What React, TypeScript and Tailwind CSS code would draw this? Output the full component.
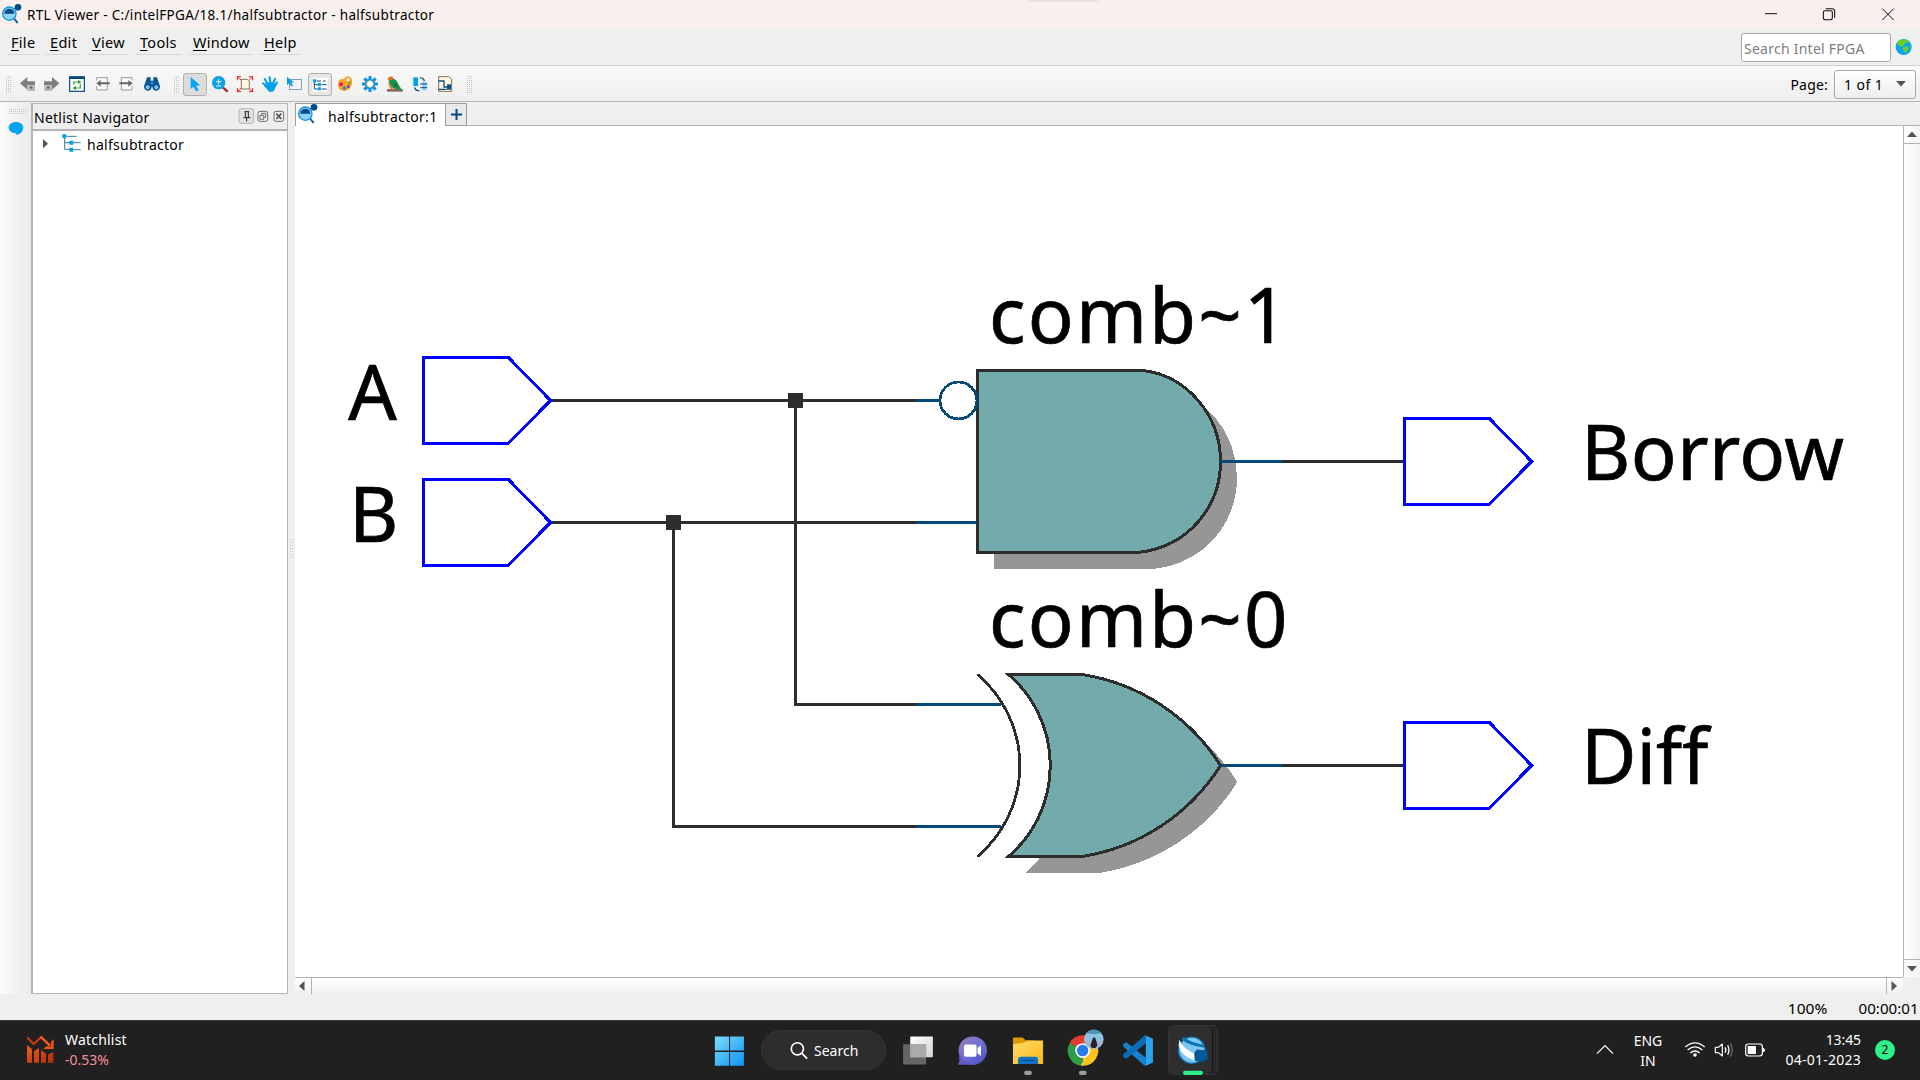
import type { ReactNode } from "react";

const UI = "font-['Noto_Sans',sans-serif]";

/* Icon strip cell: `v` is a viewBox in roughly third-pixel units. */
function Cell({ v, className, children }: { v: string; className: string; children?: ReactNode }) {
  return (
    <svg viewBox={v} className={`block shrink-0 ${className}`} fill="none">
      {children}
    </svg>
  );
}

/* Dotted drag handle: 3 x 9 dots, two pixels apart. */
function Grip({ vertical = false }: { vertical?: boolean }) {
  const dots: ReactNode[] = [];
  for (let i = 0; i < 9; i++)
    for (let j = 0; j < 3; j++)
      dots.push(
        <rect key={`${i}-${j}`} x={vertical ? j * 2 : i * 2} y={vertical ? i * 2 : j * 2} width="1" height="1" fill="#c4c4c4" />
      );
  return (
    <svg viewBox={vertical ? "0 0 5 17" : "0 0 17 5"} className={vertical ? "h-[17px] w-[5px] shrink-0" : "h-[5px] w-[17px] shrink-0"}>
      {dots}
    </svg>
  );
}

function RtlLogo({ className }: { className: string }) {
  return (
    <svg viewBox="0 0 60 60" className={className} fill="none">
      <path d="M35 42L47 57" stroke="#0b5a94" strokeWidth="6" />
      <path d="M30 18L48 9" stroke="#0f5287" strokeWidth="4" />
      <circle cx="22" cy="29" r="20" fill="#8ed3f8" stroke="#1595dc" strokeWidth="4" />
      <path d="M7 29a15 15 0 0 1 30 0z" fill="#004a86" />
      <circle cx="48" cy="10" r="10" fill="#004a86" />
    </svg>
  );
}

function TreeGlyph() {
  return (
    <>
      <path d="M194 410V448H210M194 428H210M200 409H230M220 428H242M220 449H242" stroke="#3b78a8" strokeWidth="3" />
      <path d="M187 403h12v12h-12zM208 422h12v12h-12zM208 443h12v12h-12z" fill="#00a3ea" />
    </>
  );
}

const MENUS = [
  ["F", "ile", "w-[32px]"],
  ["E", "dit", "w-[35px]"],
  ["V", "iew", "w-[41px]"],
  ["T", "ools", "w-[46px]"],
  ["W", "indow", "w-[64px]"],
  ["H", "elp", "w-[40px]"],
];

function TitleBar() {
  return (
    <div className="flex h-[29px] shrink-0 items-center bg-[#f9f0ed]">
      <RtlLogo className="ml-[2px] h-[20px] w-[20px] shrink-0 -translate-y-px" />
      <span className="ml-[5px] w-[1001px] whitespace-nowrap pt-px text-[13.5px] leading-[29px] tracking-[0.32px] text-black">
        RTL Viewer - C:/intelFPGA/18.1/halfsubtractor - halfsubtractor
      </span>
      <div className="h-[2px] w-[70px] self-start rounded-b bg-[#e9e2df]" />
      <Cell v="240 0 480 87" className="ml-auto h-[29px] w-[160px]">
        <path d="M255 41H291" stroke="#111" strokeWidth="3" />
        <rect x="430" y="32" width="27" height="27" rx="5" stroke="#111" strokeWidth="3.2" />
        <path d="M437 26H456Q464 26 464 34V53" stroke="#111" strokeWidth="3.2" />
        <path d="M607 26L641 60M641 26L607 60" stroke="#111" strokeWidth="3" />
      </Cell>
    </div>
  );
}

function MenuBar() {
  return (
    <div className="flex h-[37px] shrink-0 border-b border-[#d0d0d0] bg-[#efefef]">
      <div className="flex gap-[7px] pl-[7px]">
        {MENUS.map(([k, rest, w]) => (
          <div key={k} className={`h-[26px] border-b border-[#d6d6d6] pl-[4px] text-[14.5px] leading-[26px] tracking-[0.3px] text-black ${w}`}>
            <span className="underline underline-offset-2">{k}</span>
            {rest}
          </div>
        ))}
      </div>
      <div className="ml-auto mt-[4px] flex h-[29px] w-[150px] items-center rounded-[3px] border border-[#a9a9a9] bg-white pl-[2px] pt-[2px] text-[14px] tracking-[0.25px] text-[#7d7d7d]">
        Search Intel FPGA
      </div>
      <Cell v="645 87 75 108" className="ml-[4px] h-[36px] w-[25px]">
        <circle cx="671" cy="141" r="24" fill="#0aa3f5" />
        <path d="M652 127Q660 116 677 119L690 127 683 130 677 126 672 136 664 140 656 137zM668 141Q680 138 687 144 684 152 675 160L670 152zM690 134l5 6-3 6z" fill="#6fce1f" />
      </Cell>
    </div>
  );
}

function ToolBar() {
  return (
    <div className="flex h-[36px] shrink-0 items-start border-b border-[#b4b4b4] bg-gradient-to-b from-[#fafafa] to-[#eeeeee]">
      <div className="flex h-[35px] w-[17px] items-center pl-[6px] pt-px"><Grip vertical /></div>
      <Cell v="51 198 69 105" className="h-[35px] w-[23px]">
        <path d="M60 250L82 231V244H105V256H82V269z" fill="#7f7f7f" />
        <path d="M82 256H105V273H82z" fill="#b9b9b9" /><path d="M90 259h7v7h-7z" fill="#666" />
      </Cell>
      <Cell v="120 198 72 105" className="h-[35px] w-[24px]">
        <path d="M178 250L156 231V244H132V256H156V269z" fill="#7f7f7f" />
        <path d="M133 256H156V273H133z" fill="#b9b9b9" /><path d="M141 259h7v7h-7z" fill="#666" />
      </Cell>
      <Cell v="192 198 78 105" className="h-[35px] w-[26px]">
        <rect x="209" y="231" width="44" height="43" fill="#fff" stroke="#004a80" strokeWidth="3.5" />
        <path d="M207 229H255V237H207z" fill="#004a80" />
        <path d="M221 254V246H236M241 253V264H226" stroke="#3f9a3d" strokeWidth="3.5" />
        <path d="M234 239L244 246 234 253zM228 257L218 264 228 271z" fill="#3f9a3d" />
      </Cell>
      <Cell v="270 198 75 105" className="h-[35px] w-[25px]">
        <path d="M290 241V233H322V270H290V258" fill="#fafafa" stroke="#9b9b9b" strokeWidth="3" />
        <path d="M289 250L302 240V247H329V253H302V260z" fill="#666" />
      </Cell>
      <Cell v="345 198 69 105" className="h-[35px] w-[23px]">
        <path d="M396 241V233H364V270H396V258" fill="#fafafa" stroke="#9b9b9b" strokeWidth="3" />
        <path d="M398 250L385 240V247H358V253H385V260z" fill="#666" />
      </Cell>
      <Cell v="414 198 84 105" className="h-[35px] w-[28px]">
        <path d="M441 232H452V242H460V232H471L480 259A12 12 0 0 1 459 268L456 258 453 268A12 12 0 0 1 432 259z" fill="#0b5795" />
        <circle cx="443" cy="262" r="6" fill="#7cc6ee" /><circle cx="469" cy="262" r="6" fill="#7cc6ee" />
        <path d="M454 246h4v6h-4z" fill="#7cc6ee" />
      </Cell>
      <div className="flex h-[35px] w-[17px] items-center pl-[8px] pt-px"><Grip vertical /></div>
      <div className="mt-[7px] h-[23px] w-[24px] rounded-[3px] border border-[#b1b1b1] bg-[#dcdcdc]">
        <Cell v="552 222 66 63" className="h-[21px] w-[22px]">
          <path d="M572 231L600 256 588 257 596 271 588 274 581 260 572 266z" fill="#00a3f5" />
        </Cell>
      </div>
      <Cell v="621 198 78 105" className="h-[35px] w-[26px]">
        <path d="M669 263L683 275" stroke="#b81e1e" strokeWidth="7" />
        <circle cx="656" cy="248" r="20" fill="#08a0ea" />
        <path d="M648 245H664M656 237V253M648 258H664" stroke="#fff" strokeWidth="3" />
      </Cell>
      <Cell v="699 198 75 105" className="h-[35px] w-[25px]">
        <path d="M724 238H741L748 244V267H724z" fill="#fff8dc" stroke="#857268" strokeWidth="3" />
        <path d="M712 241V230H723M713 231L723 240M747 230H758V241M757 231L748 239M712 264V275H723M713 274L723 265M747 275H758V264M757 274L748 266" stroke="#f01818" strokeWidth="3" />
      </Cell>
      <Cell v="774 198 75 105" className="h-[35px] w-[25px]">
        <path d="M798 256L789 250M802 250L794 237M811 248L809 232M820 250L825 236M824 260L831 247" stroke="#00a3ea" strokeWidth="6" strokeLinecap="round" />
        <path d="M795 252L805 247H820L827 252Q826 270 819 275H807Q800 266 792 258z" fill="#00a3ea" />
      </Cell>
      <Cell v="849 198 75 105" className="h-[35px] w-[25px]">
        <rect x="868.5" y="238.5" width="36" height="30" stroke="#0b4f88" strokeWidth="3" strokeDasharray="3 3" />
        <path d="M861 230L882 247 874 248 879 257 873 259 868 250 861 256z" fill="#08a0ea" />
      </Cell>
      <div className="mt-[7px] h-[23px] w-[24px] rounded-[3px] border border-[#b1b1b1] bg-[#e6e6e6]">
        <Cell v="927 222 66 63" className="h-[21px] w-[22px]">
          <rect x="938" y="233" width="45" height="42" fill="#fff" />
          <path d="M943 243V267H956M943 254H956M949 243H963M965 254H980M965 267H980M969 243H977" stroke="#0b4f88" strokeWidth="3" />
          <path d="M939 238h9v9h-9zM954 249h9v9h-9zM954 262h9v9h-9z" fill="#00a3ea" />
        </Cell>
      </div>
      <Cell v="996 198 78 105" className="h-[35px] w-[26px]">
        <path d="M1014 253Q1016 234 1032 238 1034 228 1046 229 1058 233 1056 250 1052 272 1033 273 1013 272 1014 253z" fill="#f9a326" />
        <circle cx="1044" cy="239" r="5" fill="#fff" />
        <circle cx="1023" cy="253" r="6" fill="#e3215b" /><circle cx="1033" cy="264" r="5" fill="#1f85cf" />
        <circle cx="1045" cy="260" r="4" fill="#5a3fb0" /><circle cx="1048" cy="250" r="4" fill="#5bb12c" />
      </Cell>
      <Cell v="1074 198 75 105" className="h-[35px] w-[25px]">
        <path d="M1110 228V276M1086 252H1134M1093 235L1127 269M1127 235L1093 269" stroke="#1193df" strokeWidth="9" />
        <circle cx="1110" cy="252" r="16" fill="#1193df" />
        <circle cx="1110" cy="252" r="10" fill="#fff" stroke="#d9b36a" strokeWidth="3" />
      </Cell>
      <Cell v="1149 198 75 105" className="h-[35px] w-[25px]">
        <path d="M1161 267H1208V275H1161z" fill="#86685c" />
        <path d="M1163 236Q1168 227 1178 230L1182 240 1170 245z" fill="#f06a13" />
        <path d="M1166 242L1182 237Q1192 241 1196 255L1208 273 1190 267Q1170 266 1166 242z" fill="#169447" />
        <path d="M1166 243Q1170 262 1183 268L1174 269Q1162 256 1166 243z" fill="#ee7f18" />
        <path d="M1180 246L1198 262 1184 258z" fill="#0a6e2e" />
      </Cell>
      <Cell v="1224 198 75 105" className="h-[35px] w-[25px]">
        <path d="M1240 232H1254V258H1240z" fill="#00a0f0" />
        <path d="M1266 245H1280V271H1266z" fill="#8fd3f5" />
        <path d="M1261 252H1282M1261 263H1282" stroke="#0b4f88" strokeWidth="3" />
        <path d="M1260 233Q1271 234 1273 243M1244 262Q1246 272 1258 272" stroke="#0b4f88" strokeWidth="4" />
      </Cell>
      <Cell v="1299 198 69 105" className="h-[35px] w-[23px]">
        <path d="M1316 230H1346L1355 238V274H1316z" fill="#fff8dd" stroke="#7d7060" strokeWidth="3" />
        <path d="M1315 243H1332V261H1342M1315 268H1340" stroke="#0b4f88" strokeWidth="4" />
        <path d="M1341 253h12v16h-12z" fill="#0b4f88" />
      </Cell>
      <div className="flex h-[35px] w-[17px] items-center pl-[11px] pt-px"><Grip vertical /></div>
      <div className="ml-auto flex h-[35px] items-center pr-[4px] pt-px">
        <span className="pt-px text-[14px] tracking-[0.2px] text-black">Page:</span>
        <div className="ml-[6px] flex h-[29px] w-[82px] items-center justify-between rounded-[3px] border border-[#a9a9a9] bg-gradient-to-b from-white to-[#eeeeee] pl-[9px] pr-[9px]">
          <span className="pt-px text-[14px] tracking-[0.45px] text-black">1 of 1</span>
          <svg viewBox="0 0 10 6" className="mb-px h-[6px] w-[10px]"><path d="M0 0H10L5 5.5z" fill="#555" /></svg>
        </div>
      </div>
    </div>
  );
}

function Navigator() {
  return (
    <div className="mt-px flex h-[891px] w-[257px] shrink-0 flex-col border border-l-2 border-[#b4b4b4] bg-white">
      <div className="flex h-[27px] shrink-0 border-b-2 border-[#b4b4b4] bg-[#eeeeee]">
        <span className="pl-px text-[14px] leading-[27px] tracking-[0.25px] text-black">Netlist Navigator</span>
        <Cell v="710 312 150 75" className="ml-auto h-[25px] w-[50px]">
          <rect x="716" y="326" width="44" height="44" rx="6" fill="#e0e0e0" stroke="#b5b5b5" strokeWidth="3" />
          <path d="M733 335H746M735 335V353M744 335V353M729 353H750M739 353V364" stroke="#222" strokeWidth="3" />
          <rect x="773" y="334" width="29" height="30" rx="6" stroke="#6b6b6b" strokeWidth="3" />
          <path d="M784 345V340H796V352H791M779 346H790V358H779z" stroke="#6b6b6b" strokeWidth="3" />
          <rect x="821" y="334" width="29" height="30" rx="6" stroke="#6b6b6b" strokeWidth="3" />
          <path d="M828 341L843 357M843 341L828 357" stroke="#555" strokeWidth="5" />
        </Cell>
      </div>
      <div className="flex h-[29px] items-start">
        <Cell v="99 393 150 87" className="h-[29px] w-[50px]">
          <path d="M129 417L144 431 129 445z" fill="#555" />
          <TreeGlyph />
        </Cell>
        <span className="pl-[4px] text-[14px] leading-[27px] tracking-[0.27px] text-black">halfsubtractor</span>
      </div>
    </div>
  );
}

const SHADOW = "#969696";
const TEAL = "#73abac";
const INK = "#2d2d2d";
const NAVY = "#034a78";

const AND_BODY = "M977.5 370.5H1143C1188 376 1220.5 416 1220.5 461.5S1188 547 1138 552.5H977.5z";
const XOR_BODY = "M1008.5 674.5H1082A200 200 0 0 1 1220.5 765.5A200 200 0 0 1 1082 856.5H1008.5A120 120 0 0 0 1008.5 674.5z";

function Port({ x, y }: { x: number; y: number }) {
  return <path d={`M${x} ${y - 43}h85l42 43l-42.5 43h-84.5z`} stroke="#0000ff" strokeWidth="3" fill="#fff" />;
}

function Schematic() {
  return (
    <svg viewBox="295 126 1608 851" className="block h-[851px] w-[1608px] bg-white font-['Noto_Sans',sans-serif]" fill="none" fontSize="76" shapeRendering="crispEdges">
      <g stroke={INK} strokeWidth="3">
        <path d="M551 400.5H916M551 522.5H916M795.5 400.5V706M794 704.5H916M673.5 522.5V828M672 826.5H916M1282 461.5H1404M1282 765.5H1404" />
      </g>
      <path d="M788 393h15v15h-15zM666 515h15v15h-15z" fill={INK} />
      <path d={AND_BODY} fill={SHADOW} transform="translate(16.5 16.3)" />
      <path d={XOR_BODY} fill={SHADOW} transform="translate(17 16.5)" />
      <path d={AND_BODY} fill={TEAL} stroke={INK} strokeWidth="3" />
      <path d={XOR_BODY} fill={TEAL} stroke={INK} strokeWidth="3" />
      <g stroke={NAVY} strokeWidth="3">
        <path d="M916 400.5H940M916 522.5H977M916 704.5H1001M916 826.5H1001M1221 461.5H1282M1221 765.5H1282" />
        <circle cx="958.5" cy="400.5" r="18.5" fill="#fff" strokeWidth="2.8" />
      </g>
      <path d="M977.5 674.5A119 119 0 0 1 977.5 856.5" stroke={INK} strokeWidth="2.8" />
      <Port x={423.5} y={400.5} />
      <Port x={423.5} y={522.5} />
      <Port x={1404.5} y={461.5} />
      <Port x={1404.5} y={765.5} />
      <g fill="#000" stroke="#000" strokeWidth="0.7">
        <text x="348.2" y="419.7">A</text>
        <text x="349" y="541.5">B</text>
        <text x="989" y="342.8" textLength="298.5">comb~1</text>
        <text x="989" y="646.8" textLength="298.5">comb~0</text>
        <text x="1581" y="480" textLength="263">Borrow</text>
        <text x="1581" y="784.2">Diff</text>
      </g>
    </svg>
  );
}

function Arrow({ d }: { d: string }) {
  return <svg viewBox="0 0 10 10" className="h-[10px] w-[10px]"><path d={d} fill="#555" /></svg>;
}

function Editor() {
  return (
    <div className="flex w-[1625px] shrink-0 flex-col">
      <div className="flex h-[24px] shrink-0 items-start">
        <div className="mt-px flex h-[24px] w-[151px] shrink-0 items-center border border-[#9d9d9d] bg-white">
          <RtlLogo className="ml-[2px] h-[20px] w-[20px] shrink-0 -translate-y-px" />
          <span className="ml-[10px] mt-[3px] whitespace-nowrap text-[14px] leading-5 tracking-[0.27px] text-black">halfsubtractor:1</span>
        </div>
        <div className="mt-px flex h-[23px] w-[21px] shrink-0 items-center justify-center border border-l-0 border-[#9d9d9d] bg-[#e9e9e9]">
          <svg viewBox="0 0 11 11" className="h-[11px] w-[11px]"><path d="M5.5 0V11M0 5.5H11" stroke="#004a80" strokeWidth="2" /></svg>
        </div>
        <div className="h-[24px] grow border-b border-[#b4b4b4]" />
      </div>
      <div className="flex h-[851px] shrink-0">
        <Schematic />
        <div className="flex w-[17px] flex-col justify-between border-l border-[#b4b4b4] bg-gradient-to-r from-white to-[#f3f3f3]">
          <div className="flex h-[18px] items-center justify-center border-b border-[#b4b4b4]"><Arrow d="M0 7L5 1.5 10 7z" /></div>
          <div className="flex h-[18px] items-center justify-center border-t border-[#b4b4b4]"><Arrow d="M0 2L5 7.5 10 2z" /></div>
        </div>
      </div>
      <div className="flex h-[17px] w-[1608px] shrink-0 justify-between border-t border-[#b4b4b4] bg-gradient-to-b from-white to-[#f0f0f0]">
        <div className="flex w-[17px] items-center justify-center border-r border-[#b4b4b4] pr-[2px]"><Arrow d="M7.5 0L2 5 7.5 10z" /></div>
        <div className="flex w-[17px] items-center justify-center border-l border-[#b4b4b4] pr-[2px]"><Arrow d="M2.5 0L8 5 2.5 10z" /></div>
      </div>
    </div>
  );
}

function TaskBar() {
  return (
    <div className="flex h-[60px] shrink-0 border-t border-[#3c3c3c] bg-[#202020] text-[14px] text-white">
      <Cell v="60 183 120 177" className="ml-[20px] h-[59px] w-[40px]">
        <defs>
          <linearGradient id="wl" x1="0" y1="0" x2="1" y2="1"><stop stopColor="#f0601c" /><stop offset="1" stopColor="#b32a0c" /></linearGradient>
        </defs>
        <path d="M82 233L101 252 124 231" stroke="#c9370f" strokeWidth="7" />
        <path d="M122 230L150 257" stroke="#f0601c" strokeWidth="7" />
        <path d="M161 237V267H130L138 259H153V245z" fill="#e8551b" />
        <path d="M81 256L96 267V308H81zM102 273L117 264V308H102zM123 270L138 281V308H123zM144 284L160 276V308H144z" fill="url(#wl)" />
      </Cell>
      <div className="ml-[5px] mt-[9px] flex w-[635px] shrink-0 flex-col">
        <span className="leading-5 tracking-[0.2px]">Watchlist</span>
        <span className="leading-5 text-[#f2919d]">-0.53%</span>
      </div>
      <Cell v="0 32.5 180.5 174.5" className="h-[59px] w-[61px]">
        <defs>
          <linearGradient id="wn" x1="0" y1="0" x2="1" y2="1"><stop stopColor="#7fdcfb" /><stop offset="1" stopColor="#0a93f5" /></linearGradient>
        </defs>
        <path d="M44 78H86V120H44zM89 78H130V120H89zM44 124H86V165H44zM89 124H130V165H89z" fill="url(#wn)" />
      </Cell>
      <div className="mt-[9px] flex h-[40px] w-[125px] shrink-0 items-center rounded-full border border-[#353535] bg-[#2d2d2d]">
        <Cell v="263.3 89 65 59" className="ml-[27px] h-[20px] w-[22px]">
          <circle cx="288" cy="115" r="18" stroke="#fff" strokeWidth="5" /><path d="M301 128L317 144" stroke="#fff" strokeWidth="5" />
        </Cell>
        <span className="ml-[3px]">Search</span>
      </div>
      <Cell v="550.3 32.5 183.4 174.5" className="h-[59px] w-[62px]">
        <defs><linearGradient id="tv" x1="0" y1="0" x2="1" y2="1"><stop stopColor="#fff" /><stop offset="1" stopColor="#d4d4d4" /></linearGradient></defs>
        <rect x="622" y="78" width="67" height="62" rx="3" fill="url(#tv)" />
        <rect x="601" y="101" width="68" height="60" rx="3" fill="#777" opacity=".8" />
        <path d="M622 101H669V140H622z" fill="#aaa" />
      </Cell>
      <Cell v="733.7 32.5 153.8 174.5" className="h-[59px] w-[52px]">
        <defs><linearGradient id="ch" gradientUnits="userSpaceOnUse" x1="770" y1="80" x2="840" y2="160"><stop stopColor="#9a7bb8" /><stop offset=".5" stopColor="#706fd4" /><stop offset="1" stopColor="#4e4fc4" /></linearGradient></defs>
        <circle cx="807" cy="120" r="42" fill="url(#ch)" />
        <path d="M767 132V154Q763 158 764 162H806L800 140z" fill="#6358c4" />
        <circle cx="807" cy="120" r="38" fill="url(#ch)" />
        <rect x="781" y="102" width="37" height="36" rx="5" fill="#fff" /><path d="M821 112L831 104V136L821 128z" fill="#fff" />
      </Cell>
      <Cell v="887.6 32.5 165.7 174.5" className="h-[59px] w-[56px]">
        <defs><linearGradient id="ex" x1="0" y1="0" x2="1" y2="1"><stop stopColor="#ffda68" /><stop offset="1" stopColor="#fbba18" /></linearGradient></defs>
        <path d="M926 85Q926 81 930 81H955L964 90H990V110H926z" fill="#dc9a08" />
        <path d="M926 101L960 97 967 90H1015V160H926z" fill="url(#ex)" />
        <path d="M941 160V146Q941 138 949 138H992Q1000 138 1000 146V160z" fill="#0f72c4" />
        <path d="M951 149H989" stroke="#07508f" strokeWidth="3" strokeLinecap="round" />
        <rect x="959" y="180" width="23" height="12" rx="6" fill="#9b9b9b" />
      </Cell>
      <Cell v="1053.2 32.5 165.7 174.5" className="h-[59px] w-[56px]">
        <path d="M1133 120L1094 97.5A45 45 0 0 1 1172 97.5z" fill="#e33b2e" />
        <path d="M1133 120L1172 97.5A45 45 0 0 1 1133 165z" fill="#fcc31e" />
        <path d="M1133 120L1133 165A45 45 0 0 1 1094 97.5z" fill="#2a9e48" />
        <path d="M1113 108L1094 97.5 1100 90 1133 98H1172L1175 104H1140z" fill="#e33b2e" />
        <path d="M1152 131L1133 165 1126 164 1140 140z" fill="#fcc31e" />
        <circle cx="1132" cy="120" r="22" fill="#fff" /><circle cx="1132" cy="120" r="17" fill="#2c7bee" />
        <circle cx="1165" cy="87" r="29" fill="#8cc4e2" /><path d="M1143 68A29 29 0 0 1 1187 68Q1165 74 1143 68z" fill="#4a93b5" />
        <path d="M1137 92H1193Q1187 112 1165 116 1143 112 1137 92z" fill="#a6b4cc" />
        <path d="M1162 84Q1166 77 1170 84L1176 104 1170 112H1159L1155 104z" fill="#26232d" />
        <rect x="1121" y="180" width="23" height="12" rx="6" fill="#9b9b9b" />
      </Cell>
      <Cell v="1218.9 32.5 165.7 174.5" className="h-[59px] w-[56px]">
        <path d="M1252 101L1261 95 1319 141V165H1315L1253 109Q1250 105 1252 101z" fill="#1583cf" />
        <path d="M1252 138L1261 144 1319 98V75H1315L1253 130Q1250 134 1252 138z" fill="#0b6db8" />
        <path d="M1319 75L1340 85V155L1319 165z" fill="#2da4ee" />
      </Cell>
      <div className="mt-[4px] flex h-[50px] w-[50px] shrink-0 rounded-[5px] border border-[#333] bg-[#282828]">
        <div className="flex w-[44px] justify-center rounded-[5px] border-r border-[#181818] bg-[#2e2e2e]">
          <Cell v="1390.5 47.3 124.3 145" className="h-[49px] w-[42px]">
            <circle cx="1455" cy="119" r="39" fill="#7cc8f3" stroke="#0f72b4" strokeWidth="4" />
            <path d="M1418 88Q1430 118 1468 130L1466 150Q1424 138 1416 104z" fill="#fff" />
            <path d="M1424 85Q1440 104 1492 112L1494 104Q1450 96 1432 80z" fill="#0f72b4" />
            <path d="M1470 117L1500 120 1502 144 1488 154 1464 150 1462 128z" fill="#00599a" />
            <rect x="1429" y="180" width="59" height="12" rx="6" fill="#2df28b" />
          </Cell>
        </div>
      </div>
      <Cell v="90 183 120 177" className="ml-auto h-[59px] w-[40px]">
        <path d="M111 281L135 257 159 281" stroke="#fff" strokeWidth="3.5" />
      </Cell>
      <div className="mr-[9px] mt-[10px] flex w-[36px] shrink-0 flex-col items-center">
        <span className="leading-5">ENG</span>
        <span className="leading-5">IN</span>
      </div>
      <Cell v="345 183 300 177" className="h-[59px] w-[100px]">
        <g stroke="#fff" strokeWidth="4">
          <path d="M376 261Q405 236 434 261M383 270Q405 251 427 270M391 279Q405 267 419 279" />
          <path d="M466 262H475L487 252V288L475 278H466z" strokeLinejoin="round" strokeWidth="3.5" />
          <path d="M495 262Q500 270 495 278M503 256Q511 270 503 284" />
          <path d="M511 250Q522 270 511 290" stroke="#6a6a6a" />
          <rect x="557" y="252" width="50" height="36" rx="8" strokeWidth="3.5" />
        </g>
        <circle cx="405" cy="285" r="5.5" fill="#fff" />
        <rect x="563" y="258" width="25" height="24" rx="2" fill="#fff" />
        <path d="M609 263Q615 265 615 270T609 277z" fill="#fff" />
      </Cell>
      <div className="mt-[9px] flex w-[86px] shrink-0 flex-col items-end">
        <span className="leading-5 tracking-[-0.1px]">13:45</span>
        <span className="whitespace-nowrap leading-5 tracking-[0.25px]">04-01-2023</span>
      </div>
      <div className="ml-[14px] mr-[25px] mt-[19px] flex h-[20px] w-[20px] shrink-0 items-center justify-center rounded-full bg-[#2df28b] text-[12px] text-black">2</div>
    </div>
  );
}

export default function App() {
  return (
    <div className={`flex h-[1080px] w-[1920px] flex-col overflow-hidden bg-[#efefef] ${UI}`}>
      <TitleBar />
      <MenuBar />
      <ToolBar />
      <div className="flex h-[892px] shrink-0">
        <div className="flex w-[31px] shrink-0 flex-col items-center bg-gradient-to-r from-[#fafafa] to-[#ebebeb] pt-[7px]">
          <div className="pl-[4px]"><Grip /></div>
          <Cell v="24 360 48 54" className="mt-[6px] h-[18px] w-[16px]">
            <path d="M48 366C61 366 70 374 70 383 70 392 63 399 57 403L46 405 50 400C36 400 26 393 26 383 26 374 35 366 48 366z" fill="#06a4f3" />
          </Cell>
        </div>
        <Navigator />
        <div className="flex w-[7px] shrink-0 flex-col items-center justify-center gap-[2px]">
          {[0, 1, 2, 3, 4, 5, 6].map((i) => (
            <div key={i} className="h-px w-[3px] border-x border-[#c4c4c4]" />
          ))}
        </div>
        <Editor />
      </div>
      <div className="flex h-[26px] shrink-0 items-start justify-end pr-px text-[13.5px] leading-[30px] text-black">
        <span className="origin-right scale-x-[1.15]">100%</span>
        <span className="ml-[38px] origin-right scale-x-[1.12]">00:00:01</span>
      </div>
      <TaskBar />
    </div>
  );
}
